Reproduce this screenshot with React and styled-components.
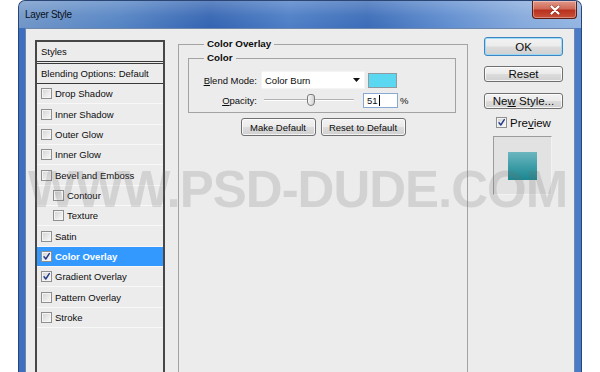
import React from 'react';
import styled, { createGlobalStyle } from 'styled-components';

const Global = createGlobalStyle`
  html, body { margin: 0; padding: 0; background: #ffffff; overflow: hidden; }
  body { font-family: "Liberation Sans", Arial, sans-serif; color: #0c0c0c; }
  * { box-sizing: border-box; }
`;

const Window = styled.div`
  position: relative;
  margin-left: 18px;
  width: 564px;
  height: 390px;
  border: 1px solid #2b4675;
  border-bottom: none;
  border-radius: 7px 7px 0 0;
  background: linear-gradient(90deg, #3d6fc0 0%, #4676c2 50%, #4a7bc7 100%);
  display: flex;
  flex-direction: column;
  overflow: hidden;
`;

const TitleBar = styled.div`
  height: 27px;
  flex-shrink: 0;
  display: flex;
  align-items: flex-start;
  justify-content: space-between;
  padding: 0 4px 0 6px;
  background:
    linear-gradient(180deg, rgba(255,255,255,0.22) 0%, rgba(255,255,255,0.05) 55%, rgba(255,255,255,0) 100%),
    linear-gradient(90deg, #7096c8 0%, #5584c4 18%, #3464b2 34%, #4d7ec6 48%, #3b6cb8 62%, #5f8dcf 76%, #86aadc 90%, #93b5e2 100%);
`;

const Title = styled.span`
  font-size: 10px;
  letter-spacing: -0.3px;
  line-height: 27px;
  color: #0a1018;
`;

const CloseButton = styled.div`
  width: 45px;
  height: 18px;
  border: 1px solid #5b1c12;
  border-top: none;
  border-radius: 0 0 4px 4px;
  background: linear-gradient(180deg, #e1988a 0%, #cf6a57 45%, #b8321f 55%, #c9503a 100%);
  box-shadow: inset 0 0 0 1px rgba(255,255,255,0.35);
  display: flex;
  align-items: center;
  justify-content: center;
`;

const Client = styled.div`
  flex: 1;
  margin: 0 6px;
  border: 1px solid #6f86ad;
  border-bottom: none;
  background: #ececec;
  display: flex;
  align-items: flex-start;
  padding-left: 9px;
  overflow: hidden;
`;

const StylesPanel = styled.div`
  width: 130px;
  height: 400px;
  margin-top: 11px;
  border: 2px solid #474747;
  border-bottom: none;
  background: #ececec;
  flex-shrink: 0;
`;

const PanelHeader = styled.div`
  height: 22px;
  padding-left: 4px;
  display: flex;
  align-items: center;
  font-size: 9.5px;
  border-bottom: 3px double #3a3a3a;
`;

const BlendingRow = styled.div`
  height: 20px;
  padding-left: 4px;
  display: flex;
  align-items: center;
  font-size: 9.5px;
  border-bottom: 1px solid #3a3a3a;
`;

const StyleItem = styled.div`
  height: 20.35px;
  display: flex;
  align-items: center;
  padding-left: ${p => (p.$indent ? 16 : 4)}px;
  border-bottom: 1px solid #f8f8f8;
  background: ${p => (p.$active ? '#3399ff' : 'transparent')};
  color: ${p => (p.$active ? '#ffffff' : '#0c0c0c')};
  font-weight: ${p => (p.$active ? 'bold' : 'normal')};
  font-size: 9.5px;
  white-space: nowrap;
`;

const Box = styled.span`
  width: 11px;
  height: 11px;
  flex-shrink: 0;
  margin-right: ${p => p.$gap || 3}px;
  border: 1px solid #8e8f8f;
  background: linear-gradient(135deg, #d2d2d2 0%, #e9e9e9 55%, #fafafa 100%);
  box-shadow: inset 0 0 0 1px #f4f4f4;
  display: inline-flex;
  align-items: center;
  justify-content: center;
`;

const Check = ({ checked, gap }) => (
  <Box $gap={gap}>
    {checked && (
      <svg width="9" height="9" viewBox="0 0 9 9">
        <path d="M2 4.8 L3.8 7 L7.3 1.6" fill="none" stroke="#24398a" strokeWidth="1.4" strokeLinecap="round" strokeLinejoin="round" />
      </svg>
    )}
  </Box>
);

const MainColumn = styled.div`
  width: 290px;
  margin-left: 13px;
  margin-top: 9px;
  flex-shrink: 0;
`;

const Group = styled.fieldset`
  margin: ${p => p.$mt || 0}px 0 0 0;
  min-width: 0;
  border: 1px solid #a3a3a3;
  padding: ${p => p.$pad};
  height: ${p => (p.$h ? `${p.$h}px` : 'auto')};
`;

const Legend = styled.legend`
  margin-left: ${p => p.$offset}px;
  padding: 0 3px;
  font-size: 9.8px;
  font-weight: bold;
  line-height: 12px;
  color: #0c0c0c;
`;

const FormRow = styled.div`
  display: flex;
  align-items: center;
  height: 18px;
  & + & { margin-top: 2px; }
`;

const FieldLabel = styled.span`
  width: 68px;
  margin-right: 4px;
  text-align: right;
  font-size: 9.5px;
`;

const Ul = styled.span`
  text-decoration: underline;
  text-underline-offset: 1px;
`;

const Select = styled.div`
  width: 104px;
  height: 18px;
  background: #ffffff;
  border: 1px solid #f4f4f4;
  padding: 0 4px 0 3px;
  display: flex;
  align-items: center;
  justify-content: space-between;
  font-size: 9.5px;
`;

const Swatch = styled.div`
  width: 29px;
  height: 15px;
  margin-left: 3px;
  background: #5ad7f1;
  border: 1px solid #8f9aa0;
`;

const Slider = styled.div`
  position: relative;
  width: 98px;
  height: 18px;
  margin-right: 4px;
`;

const Track = styled.div`
  position: absolute;
  left: 3px;
  right: 5px;
  top: 8px;
  height: 2px;
  border-top: 1px solid #b3b3b3;
  border-bottom: 1px solid #ffffff;
`;

const Thumb = styled.div`
  position: absolute;
  left: 46px;
  top: 3px;
  width: 8px;
  height: 12px;
  border: 1px solid #7b7b7b;
  border-radius: 3px 3px 4px 4px;
  background: linear-gradient(90deg, #f5f5f5 0%, #e2e2e2 60%, #cfcfcf 100%);
`;

const NumberInput = styled.div`
  width: 35px;
  height: 15px;
  background: #ffffff;
  border: 1px solid #86a9d2;
  padding-left: 3px;
  display: flex;
  align-items: center;
  font-size: 9.5px;
`;

const Caret = styled.span`
  width: 1px;
  height: 11px;
  margin-left: 1px;
  background: #000000;
`;

const Percent = styled.span`
  margin-left: 2px;
  font-size: 9.5px;
`;

const ButtonRow = styled.div`
  display: flex;
  justify-content: center;
  gap: 5px;
  margin-top: 5px;
  padding-left: 2px;
`;

const Button = styled.div`
  width: ${p => p.$w}px;
  height: ${p => p.$h}px;
  margin-top: ${p => p.$mt || 0}px;
  border: 1px solid ${p => (p.$default ? '#3c86c4' : '#707070')};
  border-radius: 3px;
  background: linear-gradient(180deg, #f3f3f3 0%, #ebebeb 48%, #dcdcdc 52%, #d0d0d0 100%);
  box-shadow: inset 0 0 0 1px ${p => (p.$default ? 'rgba(150,215,250,0.9)' : 'rgba(255,255,255,0.75)')};
  display: flex;
  align-items: center;
  justify-content: center;
  font-size: ${p => p.$fs}px;
  white-space: nowrap;
`;

const RightColumn = styled.div`
  width: 79px;
  margin-left: 16px;
  margin-top: 8px;
  flex-shrink: 0;
  display: flex;
  flex-direction: column;
`;

const PreviewRow = styled.div`
  height: 13px;
  margin-top: 7px;
  padding-left: 12px;
  display: flex;
  align-items: center;
  font-size: 11.5px;
`;

const PreviewBox = styled.div`
  width: 59px;
  height: 59px;
  margin-top: 7px;
  margin-left: 9px;
  background: #e2e2e2;
  border-top: 1px solid #9c9c9c;
  border-left: 1px solid #9c9c9c;
  border-right: 1px solid #f2f2f2;
  border-bottom: 1px solid #f2f2f2;
  display: flex;
  align-items: center;
  justify-content: center;
`;

const PreviewSwatch = styled.div`
  width: 29px;
  height: 28px;
  background: linear-gradient(180deg, #6cb6bf 0%, #3f9ea8 50%, #1b8690 100%);
`;

const Watermark = styled.div`
  position: absolute;
  left: 9px;
  top: 163px;
  font-family: "Liberation Sans", Arial, sans-serif;
  font-weight: bold;
  font-size: 51px;
  line-height: 51px;
  letter-spacing: -1px;
  text-transform: uppercase;
  color: rgba(110, 110, 110, 0.2);
  white-space: nowrap;
  pointer-events: none;
`;

const styleItems = [
  { label: 'Drop Shadow' },
  { label: 'Inner Shadow' },
  { label: 'Outer Glow' },
  { label: 'Inner Glow' },
  { label: 'Bevel and Emboss' },
  { label: 'Contour', indent: true },
  { label: 'Texture', indent: true },
  { label: 'Satin' },
  { label: 'Color Overlay', checked: true, active: true },
  { label: 'Gradient Overlay', checked: true },
  { label: 'Pattern Overlay' },
  { label: 'Stroke' },
];

export default function App() {
  return (
    <>
      <Global />
      <Window>
        <TitleBar>
          <Title>Layer Style</Title>
          <CloseButton>
            <svg width="12" height="10" viewBox="0 0 12 10">
              <path d="M2.5 1.5 L9.5 8.5 M9.5 1.5 L2.5 8.5" stroke="#5a1a10" strokeWidth="3.4" strokeLinecap="round" opacity="0.45" />
              <path d="M2.5 1.5 L9.5 8.5 M9.5 1.5 L2.5 8.5" stroke="#ffffff" strokeWidth="2.2" strokeLinecap="round" />
            </svg>
          </CloseButton>
        </TitleBar>
        <Client>
          <StylesPanel>
            <PanelHeader>Styles</PanelHeader>
            <BlendingRow>Blending Options: Default</BlendingRow>
            {styleItems.map(item => (
              <StyleItem key={item.label} $indent={item.indent} $active={item.active}>
                <Check checked={item.checked} />
                {item.label}
              </StyleItem>
            ))}
          </StylesPanel>

          <MainColumn>
            <Group $pad="0 11px 0 9px" $h={360}>
              <Legend $offset={16}>Color Overlay</Legend>
              <Group $mt={2} $pad="7px 0 3px 0">
                <Legend $offset={15}>Color</Legend>
                <FormRow>
                  <FieldLabel><Ul>B</Ul>lend Mode:</FieldLabel>
                  <Select>
                    <span>Color Burn</span>
                    <svg width="7" height="4" viewBox="0 0 7 4">
                      <path d="M0 0 H7 L3.5 4 Z" fill="#111" />
                    </svg>
                  </Select>
                  <Swatch />
                </FormRow>
                <FormRow>
                  <FieldLabel><Ul>O</Ul>pacity:</FieldLabel>
                  <Slider>
                    <Track />
                    <Thumb />
                  </Slider>
                  <NumberInput>51<Caret /></NumberInput>
                  <Percent>%</Percent>
                </FormRow>
              </Group>
              <ButtonRow>
                <Button $w={75} $h={18} $fs={9.5}>Make Default</Button>
                <Button $w={85} $h={18} $fs={9.5}>Reset to Default</Button>
              </ButtonRow>
            </Group>
          </MainColumn>

          <RightColumn>
            <Button $w={79} $h={19} $fs={11.5} $default>OK</Button>
            <Button $w={79} $h={16} $fs={11.5} $mt={10}>Reset</Button>
            <Button $w={79} $h={16} $fs={11.5} $mt={11}>Ne<Ul>w</Ul>&nbsp;Style...</Button>
            <PreviewRow>
              <Check checked />
              Pre<Ul>v</Ul>iew
            </PreviewRow>
            <PreviewBox>
              <PreviewSwatch />
            </PreviewBox>
          </RightColumn>
        </Client>
        <Watermark>www.psd-dude.com</Watermark>
      </Window>
    </>
  );
}
